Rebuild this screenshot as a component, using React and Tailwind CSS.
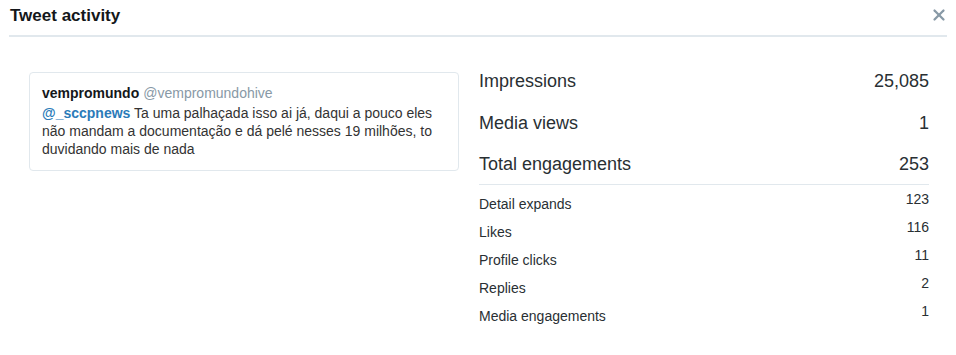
import { X } from 'lucide-react';

const big = [
  { label: 'Impressions', value: '25,085', h: 'leading-[42px]' },
  { label: 'Media views', value: '1', h: 'leading-[42px]' },
  { label: 'Total engagements', value: '253', h: 'leading-[40px]' },
];

const small = [
  { label: 'Detail expands', value: '123' },
  { label: 'Likes', value: '116' },
  { label: 'Profile clicks', value: '11' },
  { label: 'Replies', value: '2' },
  { label: 'Media engagements', value: '1' },
];

export default function App() {
  return (
    <div className="w-[956px] h-[355px] bg-white text-[#292f33] font-['Liberation_Sans',Arial,sans-serif] overflow-hidden">
      {/* Header */}
      <div className="mx-[9px] h-[37px] border-b-2 border-[#e1e8ed] flex items-start justify-between">
        <h1 className="pl-[1px] pt-[5px] text-[17px] leading-[22px] font-bold text-[#14171a]">Tweet activity</h1>
        <button className="mt-[6px] mr-[-1px] w-[18px] h-[18px] flex items-center justify-center text-[#8899a6]">
          <X size={18} strokeWidth={3} />
        </button>
      </div>

      <div className="flex gap-[20px] pl-[29px] pt-[23px]">
        {/* Tweet card */}
        <div className="w-[430px] mt-[12px] self-start border border-[#e1e8ed] rounded-[4px] px-[12px] pt-[9px] pb-[12px]">
          <div className="text-[14px] leading-[22px]">
            <span className="font-bold text-[#14171a]">vempromundo</span>
            <span className="ml-[4px] text-[#8899a6]">@vempromundohive</span>
          </div>
          <p className="text-[14px] leading-[18px] text-[#333]">
            <span className="font-bold text-[#2b7bb9]">@_sccpnews</span> Ta uma palhaçada isso ai já, daqui a pouco eles
            não mandam a documentação e dá pelé nesses 19 milhões, to duvidando mais de nada
          </p>
        </div>

        {/* Metrics */}
        <div className="w-[450px]">
          {big.map((r) => (
            <div key={r.label} className={`flex justify-between text-[18px] ${r.h}`}>
              <span>{r.label}</span>
              <span>{r.value}</span>
            </div>
          ))}
          <div className="border-t border-[#e1e8ed] pt-[5px]">
            {small.map((r) => (
              <div key={r.label} className="flex justify-between items-start text-[14px]">
                <span className="leading-[28px]">{r.label}</span>
                <span className="leading-[18px]">{r.value}</span>
              </div>
            ))}
          </div>
        </div>
      </div>
    </div>
  );
}
